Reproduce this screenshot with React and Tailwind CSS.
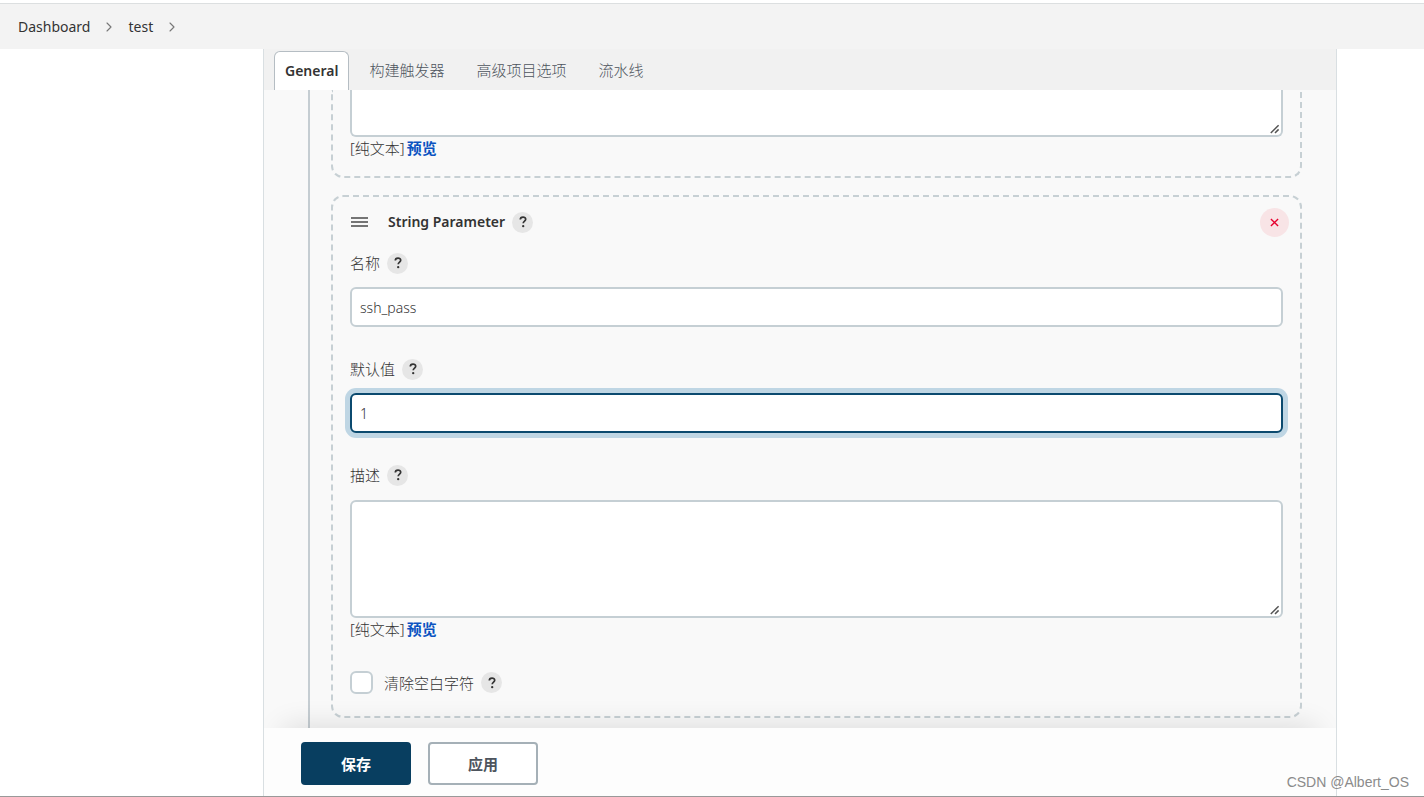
import { useId } from "react";
import { ChevronRight } from "lucide-react";

const fieldClass =
  "block w-full rounded-md border-2 border-[#c5cfd4] bg-white text-[#333]";

function Help({ topic }) {
  return (
    <button
      type="button"
      aria-label={`Help for ${topic}`}
      className="flex h-[21px] w-[21px] items-center justify-center rounded-full bg-[#e6e6e6] text-[#333]"
    >
      <svg width="8" height="12" viewBox="0 0 8 12" fill="none" aria-hidden="true">
        <path
          d="M1.3 3.6C1.3 1.9 2.4 1.1 4 1.1s2.7.9 2.7 2.2c0 1.7-2.5 1.9-2.5 4"
          stroke="currentColor"
          strokeWidth="1.7"
        />
        <circle cx="4.2" cy="10.2" r="1.15" fill="currentColor" />
      </svg>
    </button>
  );
}

function FieldLabel({ htmlFor, children }) {
  return (
    <div className="flex h-6 items-center gap-[7px]">
      <label htmlFor={htmlFor}>{children}</label>
      <Help topic={children} />
    </div>
  );
}

function TextField({ label, value, focused }) {
  const id = useId();
  return (
    <div className="flex flex-col gap-3">
      <FieldLabel htmlFor={id}>{label}</FieldLabel>
      <input
        id={id}
        type="text"
        defaultValue={value}
        className={
          focused
            ? "block h-10 w-full rounded-md border-2 border-[#0b4a6f] bg-white px-2 text-sm text-[#333] shadow-[0_0_0_5px_#bfd6e4] outline-none"
            : `${fieldClass} h-10 px-2 text-sm outline-none`
        }
      />
    </div>
  );
}

function ResizeGrip() {
  return (
    <svg
      width="10"
      height="10"
      viewBox="0 0 10 10"
      className="pointer-events-none absolute right-[3px] bottom-[3px]"
      aria-hidden="true"
    >
      <path d="M0.8 9L8.6 1.2M5 9L8.6 5.4" stroke="#555" strokeWidth="1.5" />
    </svg>
  );
}

function PreviewLine() {
  return (
    <div className="flex h-[22px] items-center gap-[2px]">
      <span>[纯文本]</span>
      <a href="#preview" className="font-bold text-[#0b53c1]">
        预览
      </a>
    </div>
  );
}

function Tab({ children }) {
  return (
    <a href="#section" className="px-4 text-[#4d545d]">
      {children}
    </a>
  );
}

function Crumb({ children }) {
  return (
    <li className="flex items-center gap-[11px]">
      <a href="#crumb" className="font-normal">
        {children}
      </a>
      <ChevronRight size={16} strokeWidth={1.7} className="text-[#777]" />
    </li>
  );
}

export default function App() {
  const descriptionId = useId();
  const trimId = useId();
  return (
    <div className="relative flex min-h-screen flex-col border-b border-[#999] bg-white font-['Noto_Sans','Noto_Sans_CJK_SC',sans-serif] text-[15px] leading-6 font-light text-[#333]">
      <header className="mt-[3px] flex h-[46px] items-center border-t border-[#dcdfe0] bg-[#f3f3f3] px-[18px] text-sm">
        <nav aria-label="Breadcrumb">
          <ol className="flex gap-[11px]">
            <Crumb>Dashboard</Crumb>
            <Crumb>test</Crumb>
          </ol>
        </nav>
      </header>

      <main className="mr-[87px] ml-[263px] flex grow flex-col overflow-hidden border-x border-[#d9dfe2] bg-[#f9f9f9]">
        <nav aria-label="Sections" className="flex h-[41px] items-center bg-[#f1f1f1] pl-[10px]">
          <a
            href="#general"
            className="mr-1 flex h-[39px] items-center self-end rounded-t-md border border-b-0 border-[#b5bdc3] bg-white px-[10px] text-sm font-semibold"
          >
            General
          </a>
          <Tab>构建触发器</Tab>
          <Tab>高级项目选项</Tab>
          <Tab>流水线</Tab>
        </nav>

        <div className="mr-[34px] ml-11 flex grow flex-col border-l-2 border-[#c5cdd2] pb-[10px] pl-[21px]">
          <section className="rounded-b-xl border-2 border-t-0 border-dashed border-[#c7d0d4] px-[17px] pb-[17px]">
            <div className="relative">
              <textarea
                aria-label="描述"
                className={`${fieldClass} h-[47px] resize-none rounded-t-none border-t-0 outline-none`}
              />
              <ResizeGrip />
            </div>
            <PreviewLine />
          </section>

          <section className="mt-[17px] rounded-xl border-2 border-dashed border-[#c7d0d4] px-[17px] pt-[10px] pb-[21px]">
            <div className="flex h-[30px] items-center">
              <svg width="18" height="10" viewBox="0 0 18 10" className="mr-5" aria-hidden="true">
                <path d="M1 1h17M1 5h17M1 9h17" stroke="#4a4a4a" strokeWidth="1.7" />
              </svg>
              <h2 className="mr-[7px] text-sm font-semibold">String Parameter</h2>
              <Help topic="String Parameter" />
              <button
                type="button"
                aria-label="Delete"
                className="-mr-[6px] ml-auto flex h-[29px] w-[29px] items-center justify-center rounded-full bg-[#f8e4e6]"
              >
                <svg width="9" height="9" viewBox="0 0 10 10" aria-hidden="true">
                  <path d="M1 1l8 8M9 1l-8 8" stroke="#e6002e" strokeWidth="1.5" />
                </svg>
              </button>
            </div>

            <div className="mt-[14px] flex flex-col gap-[30px]">
              <TextField label="名称" value="ssh_pass" />
              <TextField label="默认值" value="1" focused />
              <div>
                <FieldLabel htmlFor={descriptionId}>描述</FieldLabel>
                <div className="relative mt-[13px]">
                  <textarea
                    id={descriptionId}
                    className={`${fieldClass} h-[118px] resize-none outline-none`}
                  />
                  <ResizeGrip />
                </div>
                <PreviewLine />
              </div>
              <div className="flex h-[25px] items-center">
                <input
                  id={trimId}
                  type="checkbox"
                  className="mr-[11px] h-[23px] w-[23px] appearance-none rounded-md border-2 border-[#c5cfd4] bg-white"
                />
                <label htmlFor={trimId} className="mr-[7px]">
                  清除空白字符
                </label>
                <Help topic="清除空白字符" />
              </div>
            </div>
          </section>
        </div>

        <footer className="relative flex gap-[17px] bg-[#fdfdfd] px-[37px] pt-[14px] pb-[11px] shadow-[0_-20px_30px_-20px_rgba(0,0,0,0.14)]">
          <button
            type="button"
            className="h-[43px] w-[110px] rounded bg-[#083e60] font-bold text-white"
          >
            保存
          </button>
          <button
            type="button"
            className="h-[43px] w-[110px] rounded border-2 border-[#a5b0b7] bg-white font-bold text-[#4d545d]"
          >
            应用
          </button>
        </footer>
      </main>

      <p className="absolute right-[15px] bottom-1 font-['Liberation_Sans',sans-serif] text-sm font-normal text-[#8b8b8b]">
        CSDN @Albert_OS
      </p>
    </div>
  );
}
